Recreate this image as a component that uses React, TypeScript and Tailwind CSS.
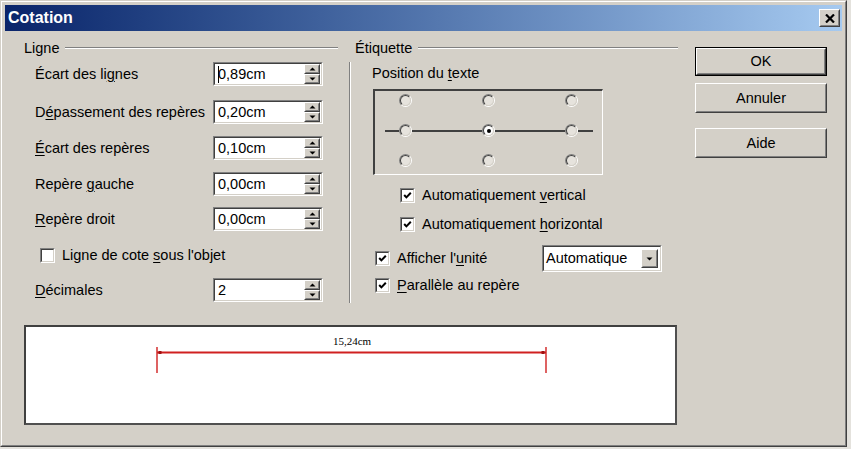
import type { ReactNode } from "react";

function Sunken({ className, children }: { className?: string; children?: ReactNode }) {
  return (
    <div className={`border border-t-[#808080] border-l-[#808080] border-r-white border-b-white ${className ?? ""}`}>
      <div className="h-full w-full border border-t-[#404040] border-l-[#404040] border-r-[#d4d0c8] border-b-[#d4d0c8] bg-white">
        {children}
      </div>
    </div>
  );
}

function Raised({ className, children }: { className?: string; children?: ReactNode }) {
  return (
    <div className={`border border-t-white border-l-white border-r-[#404040] border-b-[#404040] bg-[#d4d0c8] ${className ?? ""}`}>
      <div className="h-full w-full border border-t-[#d4d0c8] border-l-[#d4d0c8] border-r-[#808080] border-b-[#808080] flex items-center justify-center">
        {children}
      </div>
    </div>
  );
}

function Arrow({ up }: { up?: boolean }) {
  return (
    <svg width="7" height="4" viewBox="0 0 7 4">
      <path d={up ? "M0.5 3.5 L3.5 0.5 L6.5 3.5 Z" : "M0.5 0.5 L3.5 3.5 L6.5 0.5 Z"} fill="#000" />
    </svg>
  );
}

function SpinField({ value, caret }: { value: string; caret?: boolean }) {
  return (
    <Sunken className="w-[110px] h-[24px]">
      <div className="h-full flex items-center">
        <div className="flex-1 flex items-center pl-[3px]">
          {caret && <span className="w-[1px] h-[17px] bg-black -mr-[1px]" />}
          <span>{value}</span>
        </div>
        <div className="w-[16px] h-full flex flex-col mr-[1px]">
          <Raised className="flex-1">
            <Arrow up />
          </Raised>
          <Raised className="flex-1">
            <Arrow />
          </Raised>
        </div>
      </div>
    </Sunken>
  );
}

function Check({ checked }: { checked?: boolean }) {
  return (
    <Sunken className="w-[15px] h-[15px] shrink-0">
      <div className="h-full flex items-center justify-center">
        {checked && (
          <svg width="9" height="9" viewBox="0 0 9 9">
            <polyline points="1.2,4 3.4,6.4 7.8,1.8" fill="none" stroke="#000" strokeWidth="2" />
          </svg>
        )}
      </div>
    </Sunken>
  );
}

function Radio({ selected }: { selected?: boolean }) {
  return (
    <div className="w-[13px] h-[13px] shrink-0 rounded-full border border-t-[#808080] border-l-[#808080] border-r-white border-b-white">
      <div
        className={`h-full w-full rounded-full border border-t-[#404040] border-l-[#404040] border-r-[#d4d0c8] border-b-[#d4d0c8] flex items-center justify-center ${
          selected ? "bg-white" : "bg-[#e6e3dd]"
        }`}
      >
        {selected && <span className="w-[4px] h-[4px] rounded-full bg-black" />}
      </div>
    </div>
  );
}

function U({ children }: { children: ReactNode }) {
  return <span className="underline underline-offset-2">{children}</span>;
}

function GroupHeader({ title, pad }: { title: string; pad: string }) {
  return (
    <div className={`h-[16px] mt-[9px] flex items-center ${pad}`}>
      <span>{title}</span>
      <div className="flex-1 ml-[6px] border-t border-t-[#808080] border-b border-b-white" />
    </div>
  );
}

function LabelRow({ label, value, className, caret }: { label: ReactNode; value: string; className: string; caret?: boolean }) {
  return (
    <div className={`flex items-center h-[24px] ${className}`}>
      <div className="w-[178px] whitespace-nowrap">{label}</div>
      <SpinField value={value} caret={caret} />
    </div>
  );
}

function CheckRow({ label, checked, className }: { label: ReactNode; checked?: boolean; className: string }) {
  return (
    <div className={`flex items-center h-[16px] gap-[7px] ${className}`}>
      <Check checked={checked} />
      <span className="whitespace-nowrap">{label}</span>
    </div>
  );
}

function Button({ label, isDefault, className }: { label: string; isDefault?: boolean; className: string }) {
  if (isDefault) {
    return (
      <div className={`border border-black ${className}`}>
        <Raised className="h-full w-full">{label}</Raised>
      </div>
    );
  }
  return <Raised className={className}>{label}</Raised>;
}

export default function App() {
  return (
    <div className="w-[851px] h-[449px] bg-[#e4e2dd] font-['Liberation_Sans',Arial,sans-serif] text-[14.5px] text-black leading-none">
      <div className="w-[847px] h-[447px] border border-t-[#d4d0c8] border-l-[#d4d0c8] border-r-[#404040] border-b-[#404040]">
        <div className="h-full border border-t-white border-l-white border-r-[#808080] border-b-[#808080] bg-[#d4d0c8] p-[3px] flex flex-col">
          {/* title bar */}
          <div className="h-[26px] shrink-0 flex items-center justify-between bg-gradient-to-r from-[#0a246a] to-[#a6caf0] pl-[3px] pr-[2px]">
            <span className="text-white font-bold text-[16px]">Cotation</span>
            <Raised className="w-[21px] h-[18px]">
              <svg width="10" height="9" viewBox="0 0 10 9">
                <path d="M1 0.5 L9 8.5 M9 0.5 L1 8.5" stroke="#000" strokeWidth="2.2" />
              </svg>
            </Raised>
          </div>

          {/* client */}
          <div className="flex h-[272px] shrink-0">
            {/* Ligne */}
            <div className="ml-[19px] w-[314px] flex flex-col">
              <GroupHeader title="Ligne" pad="" />
              <div className="pl-[11px] flex flex-col">
                <LabelRow
                  className="mt-[6px]"
                  caret
                  value="0,89cm"
                  label={<>Écart des li<U>g</U>nes</>}
                />
                <LabelRow
                  className="mt-[14px]"
                  value="0,20cm"
                  label={<>D<U>é</U>passement des repères</>}
                />
                <LabelRow
                  className="mt-[12px]"
                  value="0,10cm"
                  label={<><U>É</U>cart des repères</>}
                />
                <LabelRow
                  className="mt-[12px]"
                  value="0,00cm"
                  label={<>Repère <U>g</U>auche</>}
                />
                <LabelRow
                  className="mt-[11px]"
                  value="0,00cm"
                  label={<><U>R</U>epère droit</>}
                />
                <CheckRow className="mt-[16px] pl-[5px]" label={<>Ligne de cote <U>s</U>ous l'objet</>} />
                <LabelRow
                  className="mt-[15px]"
                  value="2"
                  label={<><U>D</U>écimales</>}
                />
              </div>
            </div>

            {/* Étiquette */}
            <div className="ml-[11px] w-[329px] flex flex-col">
              <GroupHeader title="Étiquette" pad="pl-[6px]" />
              <div className="mt-[6px] h-[241px] border-l border-l-[#808080]">
                <div className="h-full border-l border-l-white pl-[21px] flex flex-col">
                  <div className="mt-[2px] h-[18px] flex items-center">
                    <span>Position du <U>t</U>exte</span>
                  </div>
                  <div className="mt-[7px] ml-[1px] w-[230px] h-[86px] border-t-2 border-l-2 border-t-[#404040] border-l-[#404040] border-r border-b border-r-white border-b-white flex flex-col pt-[3px] gap-[17px]">
                    <div className="flex pl-[24px] gap-[70px]">
                      <Radio />
                      <Radio />
                      <Radio />
                    </div>
                    <div className="flex items-center pl-[10px]">
                      <span className="w-[14px] h-[2px] bg-[#404040]" />
                      <Radio />
                      <span className="w-[70px] h-[2px] bg-[#404040]" />
                      <Radio selected />
                      <span className="w-[70px] h-[2px] bg-[#404040]" />
                      <Radio />
                      <span className="w-[15px] h-[2px] bg-[#404040]" />
                    </div>
                    <div className="flex pl-[24px] gap-[70px]">
                      <Radio />
                      <Radio />
                      <Radio />
                    </div>
                  </div>
                  <CheckRow className="mt-[12px] ml-[28px]" checked label={<>Automatiquement <U>v</U>ertical</>} />
                  <CheckRow className="mt-[13px] ml-[28px]" checked label={<>Automatiquement <U>h</U>orizontal</>} />
                  <div className="mt-[13px] h-[27px] flex items-center">
                    <div className="w-[167px] ml-[3px] flex items-center gap-[7px]">
                      <Check checked />
                      <span>Afficher l'<U>u</U>nité</span>
                    </div>
                    <Sunken className="w-[120px] h-[27px]">
                      <div className="h-full flex items-center">
                        <span className="flex-1 pl-[2px]">Automatique</span>
                        <Raised className="w-[17px] h-[19px] mr-[2px]">
                          <Arrow />
                        </Raised>
                      </div>
                    </Sunken>
                  </div>
                  <CheckRow className="mt-[5px] ml-[3px]" checked label={<><U>P</U>arallèle au repère</>} />
                </div>
              </div>
            </div>

            {/* buttons */}
            <div className="ml-[17px] w-[132px] flex flex-col">
              <Button className="mt-[16px] h-[29px]" isDefault label="OK" />
              <Button className="mt-[7px] h-[30px]" label="Annuler" />
              <Button className="mt-[15px] h-[30px]" label="Aide" />
            </div>
          </div>

          {/* preview */}
          <div className="mt-[22px] ml-[19px] w-[653px] h-[100px] border-2 border-t-[#404040] border-l-[#404040] border-r-[#505050] border-b-[#505050] bg-white">
            <svg width="649" height="96" viewBox="0 0 649 96">
              <line x1="131" y1="20" x2="131" y2="46" stroke="#d02020" strokeWidth="1.4" />
              <line x1="520" y1="20" x2="520" y2="46" stroke="#d02020" strokeWidth="1.4" />
              <line x1="131" y1="25.5" x2="520" y2="25.5" stroke="#d02020" strokeWidth="1.8" />
              <rect x="132.5" y="24" width="3" height="3" fill="#a01010" />
              <rect x="515.5" y="24" width="3" height="3" fill="#a01010" />
              <text x="326" y="18" fontSize="11" textAnchor="middle" fontFamily="'Liberation Serif', serif" fill="#000">
                15,24cm
              </text>
            </svg>
          </div>
        </div>
      </div>
    </div>
  );
}
